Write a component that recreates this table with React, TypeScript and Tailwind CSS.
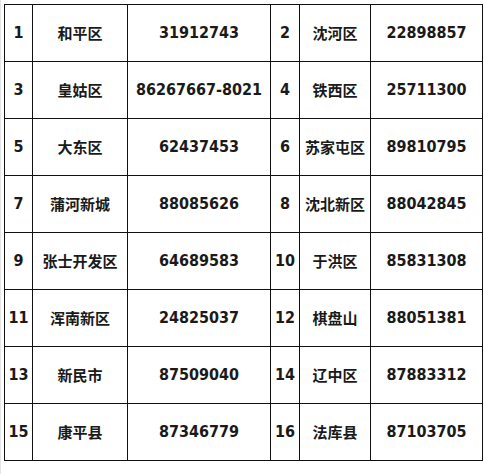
const rows = [
  ["1", "和平区", "31912743", "2", "沈河区", "22898857"],
  ["3", "皇姑区", "86267667-8021", "4", "铁西区", "25711300"],
  ["5", "大东区", "62437453", "6", "苏家屯区", "89810795"],
  ["7", "蒲河新城", "88085626", "8", "沈北新区", "88042845"],
  ["9", "张士开发区", "64689583", "10", "于洪区", "85831308"],
  ["11", "浑南新区", "24825037", "12", "棋盘山", "88051381"],
  ["13", "新民市", "87509040", "14", "辽中区", "87883312"],
  ["15", "康平县", "87346779", "16", "法库县", "87103705"],
];

const num = "font-['DejaVu_Sans_Condensed','DejaVu_Sans',sans-serif] font-bold text-[16px]";
const cjk = "font-['Noto_Sans_CJK_SC',sans-serif] font-bold text-[15px]";

export default function App() {
  return (
    <div className="w-[484px] h-[474px] bg-white relative">
      {/* faint scan edges */}
      <div className="absolute left-0 top-0 bottom-0 w-px bg-[#e4e4e4]" />
      <div className="pl-1 pt-1">
        <div className="grid grid-cols-[28px_95px_143px_29px_71px_112px] w-[479px] border-l border-t border-[#111] text-[#1a1a1a]">
          {rows.map((r) =>
            r.map((c, i) => (
              <div
                key={r[0] + "-" + i}
                className={
                  "h-[57px] border-r border-b border-[#111] flex items-center justify-center whitespace-nowrap " +
                  (i === 1 || i === 4 ? cjk : num)
                }
              >
                {c}
              </div>
            ))
          )}
        </div>
      </div>
    </div>
  );
}
